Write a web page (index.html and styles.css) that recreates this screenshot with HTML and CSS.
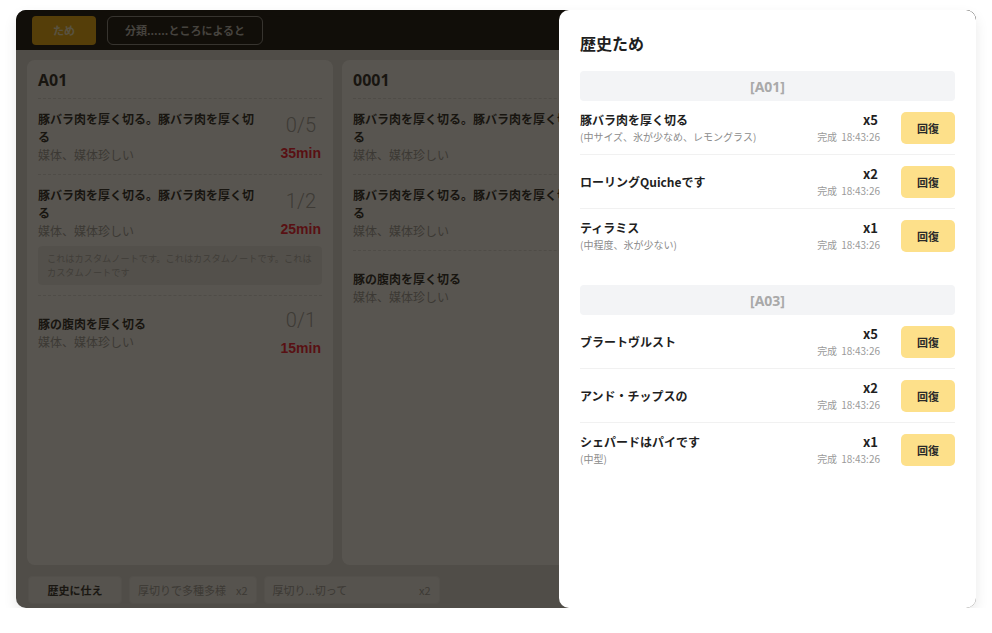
FILE: index.html
```html
<!DOCTYPE html>
<html lang="ja">
<head>
<meta charset="utf-8">
<title>歴史ため</title>
<link rel="stylesheet" href="styles.css">
</head>
<body>
<div class="frame">
  <div class="app">
    <header class="topbar">
      <button class="btn-primary">ため</button>
      <button class="btn-outline">分類......ところによると</button>
    </header>
    <main class="board">
      <section class="card">
        <div class="card-head">A01</div>
        <div class="item">
          <div class="item-main">
            <div class="item-left">
              <div class="item-title">豚バラ肉を厚く切る。豚バラ肉を厚く切る</div>
              <div class="item-sub">媒体、媒体珍しい</div>
            </div>
            <div class="item-right">
              <div class="count">0/5</div>
              <div class="mins">35min</div>
            </div>
          </div>
        </div>
        <div class="item">
          <div class="item-main">
            <div class="item-left">
              <div class="item-title">豚バラ肉を厚く切る。豚バラ肉を厚く切る</div>
              <div class="item-sub">媒体、媒体珍しい</div>
            </div>
            <div class="item-right">
              <div class="count">1/2</div>
              <div class="mins">25min</div>
            </div>
          </div>
          <div class="note">これはカスタムノートです。これはカスタムノートです。これはカスタムノートです</div>
        </div>
        <div class="item">
          <div class="item-main">
            <div class="item-left">
              <div class="item-title">豚の腹肉を厚く切る</div>
              <div class="item-sub">媒体、媒体珍しい</div>
            </div>
            <div class="item-right">
              <div class="count">0/1</div>
              <div class="mins">15min</div>
            </div>
          </div>
        </div>
      </section>
      <section class="card">
        <div class="card-head">0001</div>
        <div class="item">
          <div class="item-main">
            <div class="item-left">
              <div class="item-title">豚バラ肉を厚く切る。豚バラ肉を厚く切る</div>
              <div class="item-sub">媒体、媒体珍しい</div>
            </div>
          </div>
        </div>
        <div class="item">
          <div class="item-main">
            <div class="item-left">
              <div class="item-title">豚バラ肉を厚く切る。豚バラ肉を厚く切る</div>
              <div class="item-sub">媒体、媒体珍しい</div>
            </div>
          </div>
        </div>
        <div class="item">
          <div class="item-main">
            <div class="item-left">
              <div class="item-title">豚の腹肉を厚く切る</div>
              <div class="item-sub">媒体、媒体珍しい</div>
            </div>
          </div>
        </div>
      </section>
      <section class="card"></section>
    </main>
    <footer class="footbar">
      <button class="foot-btn foot-main">歴史に仕え</button>
      <button class="foot-btn"><span>厚切りで多種多様</span><span>x2</span></button>
      <button class="foot-btn foot-wide"><span>厚切り...切って</span><span>x2</span></button>
    </footer>
  </div>
  <div class="scrim"></div>
  <aside class="panel">
    <h2 class="panel-title">歴史ため</h2>
    <div class="group">
      <div class="group-head">[A01]</div>
      <div class="row">
        <div class="row-left">
          <div class="row-name">豚バラ肉を厚く切る</div>
          <div class="row-sub">(中サイズ、氷が少なめ、レモングラス)</div>
        </div>
        <div class="row-right">
          <div class="row-qty">x5</div>
          <div class="row-time">完成<span class="clock">18:43:26</span></div>
        </div>
        <button class="restore">回復</button>
      </div>
      <div class="row">
        <div class="row-left">
          <div class="row-name">ローリングQuicheです</div>
        </div>
        <div class="row-right">
          <div class="row-qty">x2</div>
          <div class="row-time">完成<span class="clock">18:43:26</span></div>
        </div>
        <button class="restore">回復</button>
      </div>
      <div class="row">
        <div class="row-left">
          <div class="row-name">ティラミス</div>
          <div class="row-sub">(中程度、氷が少ない)</div>
        </div>
        <div class="row-right">
          <div class="row-qty">x1</div>
          <div class="row-time">完成<span class="clock">18:43:26</span></div>
        </div>
        <button class="restore">回復</button>
      </div>
    </div>
    <div class="group">
      <div class="group-head">[A03]</div>
      <div class="row">
        <div class="row-left">
          <div class="row-name">ブラートヴルスト</div>
        </div>
        <div class="row-right">
          <div class="row-qty">x5</div>
          <div class="row-time">完成<span class="clock">18:43:26</span></div>
        </div>
        <button class="restore">回復</button>
      </div>
      <div class="row">
        <div class="row-left">
          <div class="row-name">アンド・チップスの</div>
        </div>
        <div class="row-right">
          <div class="row-qty">x2</div>
          <div class="row-time">完成<span class="clock">18:43:26</span></div>
        </div>
        <button class="restore">回復</button>
      </div>
      <div class="row">
        <div class="row-left">
          <div class="row-name">シェパードはパイです</div>
          <div class="row-sub">(中型)</div>
        </div>
        <div class="row-right">
          <div class="row-qty">x1</div>
          <div class="row-time">完成<span class="clock">18:43:26</span></div>
        </div>
        <button class="restore">回復</button>
      </div>
    </div>
  </aside>
</div>
</body>
</html>
```

FILE: styles.css
```css
* { box-sizing: border-box; }

html, body {
  margin: 0;
  padding: 0;
  background: #ffffff;
}

body {
  font-family: "Noto Sans CJK JP", "Noto Sans", sans-serif;
  color: #222;
  padding: 10px 0 0 16px;
}

button {
  font-family: inherit;
  cursor: pointer;
}

.frame {
  position: relative;
  width: 960px;
  height: 598px;
  border-radius: 10px;
  overflow: hidden;
  box-shadow: 0 6px 14px rgba(0, 0, 0, 0.09);
}

.app {
  display: flex;
  flex-direction: column;
  height: 100%;
  background: #e2e2e2;
}

/* top bar */
.topbar {
  height: 40px;
  flex: none;
  display: flex;
  align-items: center;
  gap: 11px;
  padding: 0 16px;
  background: #000;
}

.btn-primary {
  width: 64px;
  height: 29px;
  border: none;
  border-radius: 4px;
  background: #f5ae00;
  color: #fff4cc;
  font-size: 11px;
  font-weight: 700;
}

.btn-outline {
  width: 156px;
  height: 29px;
  border: 1px solid #8a8a8a;
  border-radius: 6px;
  background: transparent;
  color: #bdbdbd;
  font-size: 11px;
  font-weight: 700;
  padding: 0;
}

/* board */
.board {
  flex: 1;
  min-height: 0;
  display: grid;
  grid-template-columns: repeat(3, 306px);
  gap: 9px;
  padding: 10px 11px 0;
}

.card {
  background: #fff;
  border-radius: 8px;
  padding: 0 11px;
  overflow: hidden;
}

.card-head {
  font-family: "Noto Sans", "Noto Sans CJK JP", sans-serif;
  font-size: 16px;
  font-weight: 700;
  line-height: 20px;
  padding: 10px 0 8px;
  border-bottom: 1px dashed #dedede;
  color: #1a1a1a;
}

.item {
  padding: 11px 0 10px;
  border-bottom: 1px dashed #dedede;
}

.item:last-child {
  border-bottom: none;
}

.item-main {
  display: flex;
  align-items: center;
  gap: 12px;
  min-height: 51px;
}

.item-left {
  width: 224px;
  flex: none;
}

.item-title {
  font-size: 12px;
  font-weight: 700;
  line-height: 18px;
  color: #1c1c1c;
}

.item-sub {
  font-size: 12px;
  line-height: 18px;
  color: #9a9a9a;
}

.item-right {
  flex: 1;
  text-align: right;
}

.count {
  font-family: Roboto, "Liberation Sans", sans-serif;
  font-weight: 300;
  font-size: 20px;
  line-height: 27px;
  color: #a0a0a0;
  padding-right: 6px;
}

.mins {
  font-family: "Liberation Sans", Arial, sans-serif;
  font-weight: 700;
  font-size: 14px;
  line-height: 20px;
  margin-top: 4px;
  color: #ff0a28;
  padding-right: 1px;
}

.note {
  margin-top: 6px;
  background: #eeeeee;
  border-radius: 4px;
  padding: 5px 5px 6px 9px;
  font-size: 9.2px;
  line-height: 14px;
  color: #ababab;
}

/* footer */
.footbar {
  flex: none;
  display: flex;
  gap: 7px;
  padding: 11px 12px 4px;
}

.foot-btn {
  height: 28px;
  border: 1px solid #ececec;
  border-radius: 4px;
  background: #f6f6f6;
  color: #9c9c9c;
  font-size: 11px;
  padding: 0 8px;
  display: flex;
  align-items: center;
  gap: 10px;
}

.foot-main {
  width: 94px;
  justify-content: center;
  color: #222;
  font-weight: 700;
}

.foot-wide {
  width: 176px;
  justify-content: space-between;
}

/* scrim over the board */
.scrim {
  position: absolute;
  inset: 0;
  background: rgba(24, 20, 13, 0.72);
}

/* history panel */
.panel {
  position: absolute;
  top: 0;
  right: 0;
  bottom: 0;
  width: 417px;
  background: #fff;
  border-radius: 10px 0 0 10px;
  padding: 22px 21px 0;
}

.panel-title {
  margin: 0 0 17px;
  font-size: 16px;
  line-height: 22px;
  font-weight: 700;
  color: #1f1f1f;
}

.group {
  margin-bottom: 23px;
}

.group-head {
  height: 30px;
  border-radius: 4px;
  background: #f3f4f6;
  color: #a9a9a9;
  font-family: "Noto Sans", "Noto Sans CJK JP", sans-serif;
  font-size: 14px;
  font-weight: 700;
  display: flex;
  align-items: center;
  justify-content: center;
}

.row {
  display: flex;
  align-items: center;
  padding: 10px 0;
  border-bottom: 1px solid #f1f1f1;
}

.row:last-child {
  border-bottom: none;
}

.row-left {
  flex: 1;
  display: flex;
  flex-direction: column;
  gap: 1px;
}

.row-name {
  font-size: 12px;
  line-height: 17px;
  font-weight: 700;
  color: #1f1f1f;
}

.row-sub {
  font-size: 10px;
  line-height: 15px;
  color: #8c8c8c;
}

.row-right {
  text-align: right;
  display: flex;
  flex-direction: column;
  gap: 1px;
}

.row-qty {
  font-size: 13px;
  line-height: 17px;
  font-weight: 700;
  color: #1f1f1f;
  padding-right: 2px;
}

.row-time {
  font-size: 10px;
  line-height: 15px;
  color: #9a9a9a;
}

.clock {
  margin-left: 4px;
}

.restore {
  width: 54px;
  height: 32px;
  margin-left: 21px;
  border: none;
  border-radius: 5px;
  background: #fde08a;
  color: #2a2a2a;
  font-size: 11px;
  font-weight: 700;
  padding: 0;
}
```
